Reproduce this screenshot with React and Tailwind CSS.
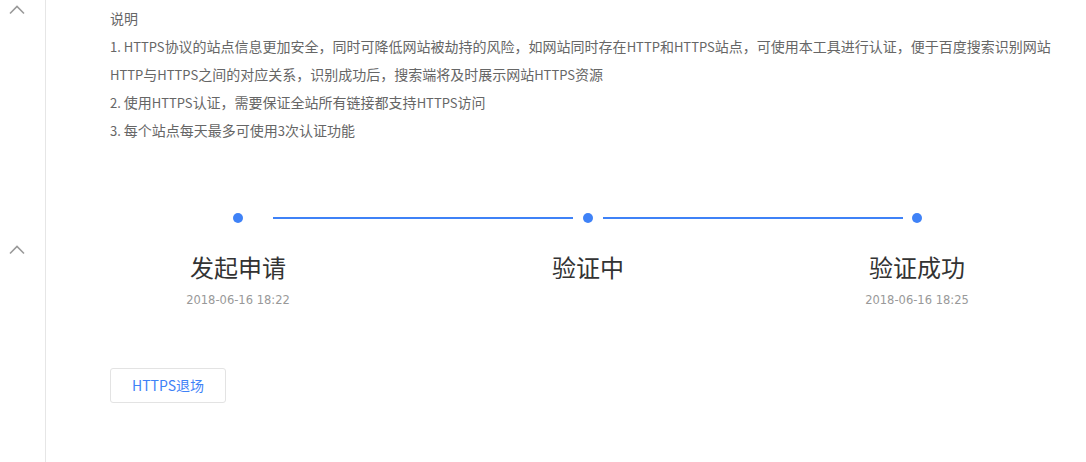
import React from "react";

const Chevron = () => (
  <svg width="16" height="10" viewBox="0 0 16 10" fill="none">
    <polyline points="1,8.5 8,1.5 15,8.5" stroke="#9a9a9a" strokeWidth="1.6" />
  </svg>
);

const lines = [
  "说明",
  "1. HTTPS协议的站点信息更加安全，同时可降低网站被劫持的风险，如网站同时存在HTTP和HTTPS站点，可使用本工具进行认证，便于百度搜索识别网站",
  "HTTP与HTTPS之间的对应关系，识别成功后，搜索端将及时展示网站HTTPS资源",
  "2. 使用HTTPS认证，需要保证全站所有链接都支持HTTPS访问",
  "3. 每个站点每天最多可使用3次认证功能",
];

const Line = ({ text }) => {
  const parts = text.split(/([A-Za-z0-9. ]+)/).filter(Boolean);
  return (
    <div className="whitespace-nowrap h-[28px]">
      {parts.map((p, i) =>
        /^[A-Za-z0-9. ]+$/.test(p) ? (
          <span key={i} className="text-[13px]">
            {p}
          </span>
        ) : (
          <span key={i}>{p}</span>
        )
      )}
    </div>
  );
};

export default function App() {
  return (
    <div
      className="flex h-[462px] w-[1086px] bg-white overflow-hidden"
      style={{ fontFamily: '"Noto Sans CJK SC", "Noto Sans", sans-serif' }}
    >
      <div className="w-[46px] shrink-0 border-r border-[#e6e6e6] flex flex-col items-center">
        <div className="mt-[5px] ml-[-11px]">
          <Chevron />
        </div>
        <div className="mt-[230px] ml-[-11px]">
          <Chevron />
        </div>
      </div>
      <div className="flex-1 pl-[64px]">
        <div className="pt-[4px] text-[14px] leading-[28px] text-[#666]">
          {lines.map((l, i) => (
            <Line key={i} text={l} />
          ))}
        </div>
        <div className="mt-[69px] flex items-center h-[10px]">
          <div className="ml-[123px] w-[10px] h-[10px] rounded-full bg-[#3f82f7]" />
          <div className="ml-[30px] w-[300px] h-[2px] bg-[#3f82f7]" />
          <div className="ml-[10px] w-[10px] h-[10px] rounded-full bg-[#3f82f7]" />
          <div className="ml-[10px] w-[300px] h-[2px] bg-[#3f82f7]" />
          <div className="ml-[9px] w-[10px] h-[10px] rounded-full bg-[#3f82f7]" />
        </div>
        <div className="mt-[28px] flex">
          <div className="ml-[28px] w-[200px] flex flex-col items-center">
            <div className="text-[24px] leading-[32px] text-[#333]">发起申请</div>
            <div
              className="mt-[9px] leading-[16px] text-[#999]"
              style={{ fontFamily: '"DejaVu Sans", sans-serif', fontSize: "11.5px" }}
            >
              2018-06-16 18:22
            </div>
          </div>
          <div className="ml-[150px] w-[200px] flex flex-col items-center">
            <div className="text-[24px] leading-[32px] text-[#333]">验证中</div>
          </div>
          <div className="ml-[129px] w-[200px] flex flex-col items-center">
            <div className="text-[24px] leading-[32px] text-[#333]">验证成功</div>
            <div
              className="mt-[9px] leading-[16px] text-[#999]"
              style={{ fontFamily: '"DejaVu Sans", sans-serif', fontSize: "11.5px" }}
            >
              2018-06-16 18:25
            </div>
          </div>
        </div>
        <button className="mt-[60px] w-[116px] h-[35px] border border-[#e3e3e3] rounded-[3px] bg-white text-[14px] text-[#3f82f7] flex items-center justify-center">
          HTTPS退场
        </button>
      </div>
    </div>
  );
}
